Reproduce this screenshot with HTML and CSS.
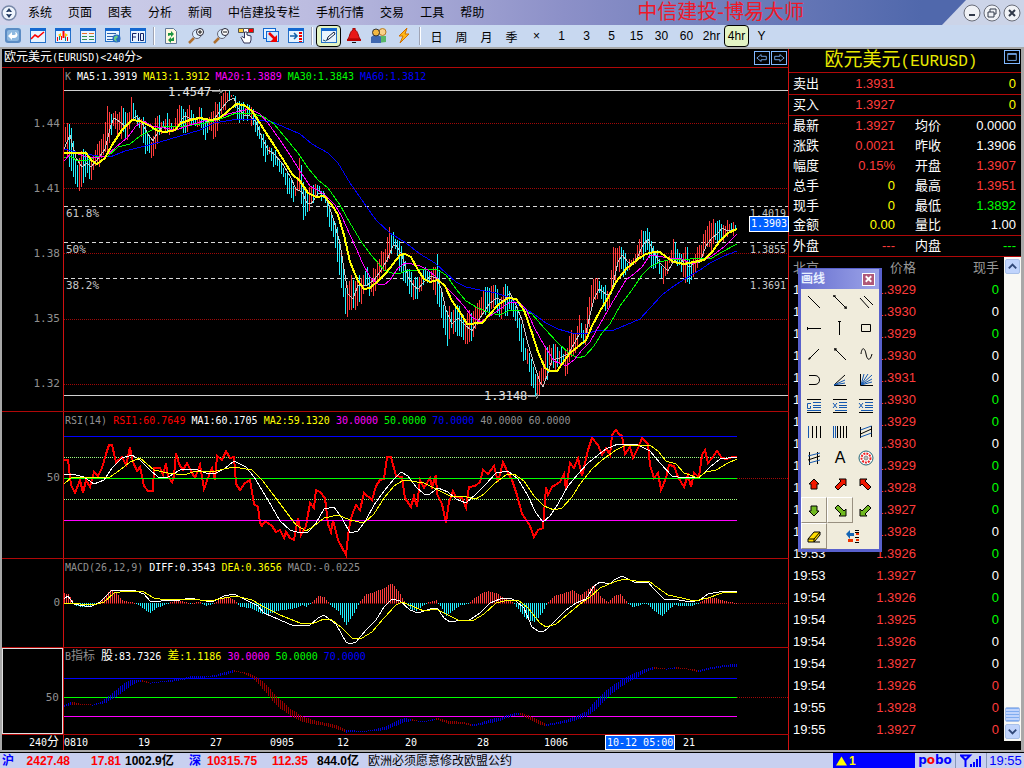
FILE: index.html
```
<!DOCTYPE html>
<html lang="zh-CN">

<head>
    <meta charset="UTF-8">
    <meta name="viewport" content="width=device-width, initial-scale=1.0">
    <title>中信建投-博易大师</title>
    <link rel="stylesheet" href="styles.css">
</head>

<body>
    <header class="titlebar">
        <svg class="logo" viewBox="0 0 16 16"><circle cx="8" cy="8" r="7" fill="#eef4fc" stroke="#7888a8" stroke-width="1.5"/><path d="M8 3l3 4H5zM8 13l3-4H5z" fill="#203860"/><circle cx="8" cy="8" r="1.5" fill="#fff"/></svg>
        <nav class="menu">
            <a href="#">系统</a>
            <a href="#">页面</a>
            <a href="#">图表</a>
            <a href="#">分析</a>
            <a href="#">新闻</a>
            <a href="#">中信建投专栏</a>
            <a href="#">手机行情</a>
            <a href="#">交易</a>
            <a href="#">工具</a>
            <a href="#">帮助</a>
        </nav>
        <h1 class="app-name">中信建投-博易大师</h1>
        <div class="window-buttons">
            <button type="button" aria-label="最小化"><svg viewBox="0 0 18 18"><circle cx="9" cy="9" r="8"/><path d="M6 11h6" stroke-width="2"/></svg></button>
            <button type="button" aria-label="还原"><svg viewBox="0 0 18 18"><circle cx="9" cy="9" r="8"/><path d="M7 8V5h6v5h-2M5 8h6v5H5z"/></svg></button>
            <button type="button" aria-label="关闭"><svg viewBox="0 0 18 18"><circle cx="9" cy="9" r="8"/><path d="M6 6l6 6M12 6l-6 6" stroke-width="2"/></svg></button>
        </div>
    </header>

    <div class="toolbar">
        <button type="button" aria-label="返回"><svg viewBox="0 0 16 16"><rect x="0" y="0" width="16" height="15" rx="3" fill="#5b8cc4"/><rect x="2" y="2" width="12" height="11" rx="2" fill="#8db8e0"/><path d="M3 8l4-4v3h2c2 0 2-2 1-3 3 0 4 6-1 6H7v2z" fill="#fff"/></svg></button>
        <button type="button" aria-label="走势图"><svg viewBox="0 0 16 16"><rect x="0.5" y="0.5" width="15" height="14" fill="#e8f4ff" stroke="#2470c8"/><path d="M0 1.5h16" stroke="#1468d0" stroke-width="3"/><path d="M1 11l4-4 3 2 6-5" fill="none" stroke="#f00" stroke-width="1.6"/></svg></button>
        <button type="button" aria-label="K线图"><svg viewBox="0 0 16 16"><rect x="0.5" y="0.5" width="15" height="14" fill="#e8f4ff" stroke="#2470c8"/><path d="M0 1.5h16" stroke="#1468d0" stroke-width="3"/><path d="M2.5 9v4M6.5 8v4M12.5 9v4" stroke="#f00"/><path d="M4.5 8v4M10.5 8v5" stroke="#088"/><path d="M3 7l3-2v4zM13 7l-3-2v4z" fill="#fc0"/><path d="M8.5 3v7" stroke="#f00" stroke-width="2"/></svg></button>
        <button type="button" aria-label="报价表"><svg viewBox="0 0 16 16"><rect x="0.5" y="0.5" width="15" height="14" fill="#e8f4ff" stroke="#2470c8"/><path d="M0 1.5h16" stroke="#1468d0" stroke-width="3"/><path d="M2 5.5h5M9 5.5h5" stroke="#e87028"/><path d="M2 8.5h5M9 8.5h5M2 11.5h5M9 11.5h5" stroke="#30904c"/></svg></button>
        <button type="button" aria-label="资讯"><svg viewBox="0 0 16 16"><rect x="0.5" y="0.5" width="14" height="13" fill="#e8f4ff" stroke="#2470c8"/><path d="M0 1.5h15" stroke="#1468d0" stroke-width="3"/><path d="M2 5.5h9M2 8.5h6M2 11.5h6" stroke="#2c60a8"/><circle cx="11.5" cy="10.5" r="4" fill="#286cc0"/><path d="M9 9q3-3 4 0l-2 2 1 3-3-2z" fill="#6c8"/></svg></button>
        <button type="button" aria-label="F10"><svg viewBox="0 0 16 16"><rect x="0.5" y="0.5" width="15" height="14" fill="#e8f4ff" stroke="#2470c8"/><path d="M0 1.5h16" stroke="#1468d0" stroke-width="3"/><path d="M2.5 13V5.5h4M3 9h3M8.5 5v8M10.500 5.500h3v7h-3z" fill="none" stroke="#126"/></svg></button>
        <span class="separator"></span>
        <button type="button" aria-label="刷新"><svg viewBox="0 0 16 16"><path d="M2.5 .5h8l3 3v12h-11z" fill="#fff8e0" stroke="#607898"/><path d="M5 8V5h3V3l3 3-3 3V7M11 9v4H8v2l-3-3 3-3v2" fill="#1b9440"/></svg></button>
        <button type="button" aria-label="放大"><svg viewBox="0 0 16 16"><path d="M6 10l-5 5" stroke="#b07030" stroke-width="2.5"/><circle cx="9" cy="6" r="4.5" fill="#dceeff" stroke="#667"/><circle cx="12" cy="4" r="3.500" fill="#fff" stroke="#223"/><path d="M10 4h4M12 2v4" stroke="#111"/></svg></button>
        <button type="button" aria-label="缩小"><svg viewBox="0 0 16 16"><path d="M6 10l-5 5" stroke="#b07030" stroke-width="2.5"/><circle cx="9" cy="6" r="4.5" fill="#dceeff" stroke="#667"/><circle cx="12" cy="4" r="3.500" fill="#fff" stroke="#223"/><path d="M10 4h4" stroke="#111"/></svg></button>
        <button type="button" aria-label="选择"><svg viewBox="0 0 16 16"><path d="M.5 .5h5v4h-5z" fill="#ffd040" stroke="#555"/><path d="M5.500 .5h5v4h-5z" fill="#fff" stroke="#555"/><path d="M10.500 .5h5v4h-5z" fill="#f00" stroke="#555"/><path d="M6.5 4v6L4 8.500l-1 1L6 15h6l1-3V8L9 7V4z" fill="#fff" stroke="#335"/></svg></button>
        <button type="button" aria-label="导出"><svg viewBox="0 0 16 16"><rect x=".5" y=".5" width="12" height="10" fill="#e8f4ff" stroke="#1468d0"/><rect x="3.5" y="3.5" width="12" height="10" fill="#cde6ff" stroke="#1468d0"/><path d="M6 5l6 6" stroke="#e00" stroke-width="2.5"/><path d="M14 7v7H7z" fill="#e00"/></svg></button>
        <button type="button" aria-label="侧栏"><svg viewBox="0 0 16 16"><rect x=".5" y=".5" width="15" height="14" fill="#e8f4ff" stroke="#2470c8"/><path d="M0 1.5h16" stroke="#1468d0" stroke-width="3"/><path d="M2 8h6M6 5l3 3-3 3" fill="none" stroke="#125fa8" stroke-width="1.5"/><path d="M12.5 4v10" stroke="#e00" stroke-width="3" stroke-dasharray="2 1"/></svg></button>
        <span class="separator"></span>
        <button type="button" class="active" aria-label="画线"><svg viewBox="0 0 16 16"><rect x=".5" y=".5" width="15" height="14" fill="#e8f4ff" stroke="#2470c8"/><path d="M0 1.5h16" stroke="#1468d0" stroke-width="3"/><path d="M2 12q3 2 4 0" fill="none" stroke="#157"/><path d="M6 12l1-3 6-5 1 2-6 5z" fill="#fff" stroke="#124"/></svg></button>
        <button type="button" aria-label="预警"><svg viewBox="0 0 16 16"><path d="M7 0h2v2c3 1 3 6 5 9H2c2-3 2-8 5-9z" fill="#e81818" stroke="#900"/><path d="M1 11h14v2H1z" fill="#b00"/><path d="M6 14h4v1H6z" fill="#111"/></svg></button>
        <button type="button" aria-label="用户"><svg viewBox="0 0 16 16"><path d="M7 15V8h8v6z" fill="#58b868"/><circle cx="11.5" cy="4" r="3.5" fill="#f8d088" stroke="#b87820"/><path d="M0 15V9l3-2h4l3 2v6z" fill="#4068b0"/><circle cx="5" cy="4.5" r="3.5" fill="#f4b840" stroke="#333"/></svg></button>
        <button type="button" aria-label="闪电"><svg viewBox="0 0 16 16"><path d="M11 0L3 8h4l-3 7 9-9H9z" fill="#ffb818" stroke="#d07000"/></svg></button>
        <span class="separator"></span>
        <button type="button">日</button>
        <button type="button">周</button>
        <button type="button">月</button>
        <button type="button">季</button>
        <button type="button">×</button>
        <button type="button">1</button>
        <button type="button">3</button>
        <button type="button">5</button>
        <button type="button">15</button>
        <button type="button">30</button>
        <button type="button">60</button>
        <button type="button">2hr</button>
        <button type="button" class="active">4hr</button>
        <button type="button">Y</button>
    </div>

    <main class="workspace">
        <section class="charts">
            <div class="chart-title">
                <h2><span class="cjk">欧元美元</span>(EURUSD)&lt;240<span class="cjk">分</span>&gt;</h2>
                <div class="chart-nav">
                    <button type="button" aria-label="上一个"><svg viewBox="0 0 16 14"><path d="M2 7l5-4v2h6v4H7v2z"/></svg></button>
                    <button type="button" aria-label="下一个"><svg viewBox="0 0 16 14"><path d="M14 7L9 3v2H3v4h6v2z"/></svg></button>
                </div>
            </div>

            <div class="panel panel-k">
                <div class="axis axis-k">
                    <span>1.44</span>
                    <span>1.41</span>
                    <span>1.38</span>
                    <span>1.35</span>
                    <span>1.32</span>
                </div>
                <div class="plot">
                    <svg viewBox="64 68 724 343" preserveAspectRatio="none">
                        <path class="dots" d="M64 123.5H788M64 188.5H788M64 253.5H788M64 319.5H788M64 384.5H788"/>
                        <path class="limit" d="M64 90.5H788M64 395.5H788"/>
                        <path class="fib" d="M64 206.5H788M64 242.5H788M64 278.5H788"/>
                        <g id="candles"></g>
                        <polyline class="line gray" points="64,149 70,135 76,158 82,167 87,163 91,167 97,160 105,149 111,125 114,118 120,122 126,127 130,122 136,116 142,123 148,134 153,141 158,132 163,126 168,130 175,131 184,116 192,119 200,117 208,122 215,118 222,108 228,101 234,98 238,108 244,115 250,116 256,122 262,138 268,150 274,154 282,163 290,176 296,189 302,192 307,203 311,204 318,194 324,193 328,203 334,221 340,244 345,275 348,294 353,299 358,285 366,286 374,280 380,272 386,262 393,246 396,245 402,255 408,277 414,286 418,289 424,282 430,276 436,278 441,288 446,310 452,324 458,318 464,324 472,331 478,321 484,312 490,303 497,298 503,301 510,293 516,305 522,320 528,344 534,364 540,382 543,387 548,373 552,360 560,358 568,354 574,344 580,333 586,333 590,315 594,299 599,289 606,294 611,294 614,280 618,262 622,255 628,262 633,265 638,256 643,245 648,239 654,253 660,263 668,271 674,261 680,258 685,264 690,267 695,262 700,262 706,246 712,238 718,233 722,228 728,231 737,229"/>
                        <polyline class="line blue" points="64,149 80,153 98,156 110,157 125,151 145,146 160,142 180,136 200,130 214,123 232,120 250,119 272,122 284,127 300,134 312,144 328,153 338,163 350,183 364,203 376,220 390,233 406,243 420,254 435,263 446,273 456,282 466,287 480,290 496,293 508,297 520,306 534,314 546,323 558,329 572,333 586,334 598,330 614,330 626,325 640,319 650,308 662,295 674,286 688,277 700,270 710,263 724,256 737,251"/>
                        <polyline class="line green" points="64,158 70,156 76,160 88,160 98,156 108,156 118,147 130,144 140,136 152,130 166,126 184,126 200,124 214,121 226,117 236,113 250,113 264,117 274,124 284,136 298,153 308,168 318,180 328,188 340,205 350,223 362,243 372,256 384,270 392,273 398,274 406,271 418,270 436,269 446,275 456,289 466,301 478,308 490,313 500,315 510,310 522,310 532,314 544,328 558,343 570,354 578,358 585,356 594,346 602,333 610,324 620,306 634,287 642,275 650,267 660,262 672,259 690,259 712,258 722,252 737,244"/>
                        <polyline class="line magenta" points="64,161 72,152 84,156 92,158 106,156 116,147 128,137 136,126 144,121 152,126 164,128 176,130 190,125 204,121 216,120 228,114 236,112 250,109 260,114 268,123 280,140 290,155 300,171 310,186 324,194 335,205 342,217 350,235 357,250 362,262 370,277 378,284 384,285 390,280 398,268 405,263 412,264 420,266 428,270 436,277 444,285 454,295 464,306 472,317 480,322 490,316 500,309 510,302 518,302 526,309 534,327 544,345 554,361 566,366 574,360 582,350 590,342 600,324 612,303 626,280 634,274 642,267 650,255 658,256 668,258 680,258 692,264 704,260 712,256 724,247 737,234"/>
                        <polyline class="line yellow thick" points="64,153 86,153 92,161 97,164 105,158 112,145 122,130 132,120 140,121 150,126 158,131 166,132 175,130 181,123 190,120 200,118 210,120 218,119 226,113 236,104 244,105 252,111 258,120 266,133 274,145 284,161 292,174 300,181 308,193 316,197 324,196 332,205 338,215 344,235 350,262 358,281 364,289 370,288 378,281 386,273 393,264 400,255 405,254 411,257 418,270 424,279 430,282 438,280 445,286 452,301 460,312 467,324 482,323 490,314 498,305 508,298 516,299 524,310 532,333 538,352 545,368 550,371 557,371 562,364 570,353 580,345 586,340 592,326 600,311 608,298 616,282 626,269 638,259 646,254 654,252 660,252 666,257 674,262 684,264 694,262 704,260 712,252 720,241 728,233 737,229"/>
                        <path class="marker" d="M212 91.5h9M219 89l3 2.5-3 2.5M528 396h8M536 393l2 3-2 3"/>
                    </svg>
                    <div class="legend">
                        <span class="c-gray">K</span>
                        <span class="c-white">MA5:1.3919</span>
                        <span class="c-yellow">MA13:1.3912</span>
                        <span class="c-magenta">MA20:1.3889</span>
                        <span class="c-green">MA30:1.3843</span>
                        <span class="c-blue">MA60:1.3812</span>
                    </div>
                    <span class="mark mark-high">1.4547</span>
                    <span class="mark mark-low">1.3148</span>
                    <span class="level level-618">61.8%</span>
                    <span class="level level-500">50%</span>
                    <span class="level level-382">38.2%</span>
                    <span class="price level-618">1.4019</span>
                    <span class="price level-500">1.3855</span>
                    <span class="price level-382">1.3691</span>
                    <span class="price-now">1.3903</span>
                </div>
            </div>

            <div class="panel panel-rsi">
                <div class="axis axis-rsi"><span>50</span></div>
                <div class="plot">
                    <svg viewBox="64 412 724 146" preserveAspectRatio="none">
                        <path class="dots" d="M737 478.5H788"/>
                        <path class="dots pale" d="M64 457.5H737M64 499.5H737"/>
                        <polyline class="line red thick" points="64,460 68,460 71,485 75,493 80,480 83,493 86,480 90,487 94,472 98,476 102,468 106,454 109,445 112,445 116,462 122,457 126,465 128,457 130,447 133,462 137,471 140,467 144,486 148,491 153,491 154,468 160,468 163,475 166,463 168,477 172,482 174,476 176,453 179,464 183,470 187,463 190,469 195,478 200,465 204,489 208,478 212,468 215,480 217,456 222,460 226,451 230,458 234,457 236,484 240,490 245,483 250,480 254,504 258,507 260,523 262,526 265,521 272,526 276,532 280,530 284,538 286,532 290,538 294,540 298,518 301,535 306,526 310,503 314,508 316,490 320,492 325,498 328,524 331,532 333,520 338,540 346,555 349,528 352,515 356,505 360,510 364,493 372,500 376,486 380,480 384,479 387,457 391,457 396,476 402,477 405,498 411,507 414,496 417,507 420,480 424,488 430,478 432,487 436,475 437,494 442,504 446,523 449,502 453,491 456,497 462,498 466,508 469,487 475,486 480,482 483,470 488,474 494,466 498,482 503,462 507,471 512,480 517,495 522,514 527,521 530,526 534,537 538,530 543,528 546,487 548,495 552,487 560,482 564,474 566,490 570,463 574,468 578,458 582,476 588,450 592,438 598,445 602,455 606,448 610,455 612,435 616,430 619,434 622,436 625,454 630,447 633,458 638,448 642,438 648,444 650,465 654,478 658,473 661,490 666,478 669,465 674,466 678,477 684,487 688,475 691,487 694,473 699,477 702,455 705,450 708,463 712,458 717,451 722,458 727,459 732,457 737,457"/>
                        <path class="line blue" d="M64 436.5H737"/>
                        <path class="line green" d="M64 478.5H737"/>
                        <path class="line magenta" d="M64 520.5H737"/>
                        <polyline class="line white" points="64,475 72,474 84,477 94,484 104,480 112,468 122,458 132,455 140,460 150,470 158,477 168,477 180,470 195,469 206,473 214,474 224,469 234,461 246,467 254,477 262,490 272,507 280,521 290,530 300,533 308,532 316,523 324,509 334,507 342,518 350,533 358,531 366,520 374,505 384,491 394,479 401,472 408,476 416,487 424,494 430,494 438,488 448,492 456,499 466,503 476,494 486,484 496,473 508,471 518,479 528,496 536,513 543,522 550,516 558,504 568,486 578,474 588,463 598,455 606,449 618,444 636,444 650,451 660,463 672,476 684,478 700,477 710,467 720,459 737,457"/>
                        <polyline class="line yellow" points="64,484 72,477 90,478 110,477 120,470 130,462 140,458 154,470 168,473 184,475 196,471 212,472 224,469 234,467 252,470 262,480 272,493 284,509 296,525 306,531 314,526 324,518 338,515 350,520 364,523 374,514 384,498 394,486 404,480 424,483 440,491 450,496 462,496 476,499 484,494 494,484 506,475 514,474 524,481 534,496 544,506 554,510 562,508 572,497 580,484 592,469 602,460 616,450 626,445 650,445 658,451 666,461 676,464 684,473 698,478 706,472 716,470 728,463 737,459"/>
                    </svg>
                    <div class="legend">
                        <span class="c-gray">RSI(14)</span>
                        <span class="c-red">RSI1:60.7649</span>
                        <span class="c-white">MA1:60.1705</span>
                        <span class="c-yellow">MA2:59.1320</span>
                        <span class="c-magenta">30.0000</span>
                        <span class="c-green">50.0000</span>
                        <span class="c-blue">70.0000</span>
                        <span class="c-gray">40.0000</span>
                        <span class="c-gray">60.0000</span>
                    </div>
                </div>
            </div>

            <div class="panel panel-macd">
                <div class="axis axis-macd"><span>0</span></div>
                <div class="plot">
                    <svg viewBox="64 559 724 88" preserveAspectRatio="none">
                        <path class="dots" d="M64 603.5H788"/>
                        <g id="histogram"></g>
                        <polyline class="line white" points="64,599 68,596 74,604 90,607 100,602 112,590 120,590 136,591 144,594 150,601 156,602 166,600 180,600 190,598 200,600 212,602 224,596 234,594 246,600 258,606 264,613 280,620 294,626 304,625 310,625 318,618 324,615 336,624 346,642 350,644 356,642 366,630 376,620 384,607 392,599 400,601 410,610 418,613 430,609 437,608 444,618 450,622 462,620 468,621 480,613 490,603 500,599 510,598 516,601 524,608 532,627 538,631 543,632 548,628 556,620 566,610 576,603 586,599 594,586 600,582 610,584 614,580 622,576 634,582 648,582 654,589 664,599 674,599 690,602 700,600 708,594 724,591 737,592"/>
                        <polyline class="line yellow" points="64,603 80,604 94,605 104,602 114,593 126,591 142,591 154,598 166,600 190,599 210,601 224,598 236,596 252,600 264,607 280,615 300,623 312,624 324,619 332,620 342,628 352,638 362,638 372,632 384,618 396,605 402,602 414,607 424,611 436,609 446,614 458,620 474,620 484,614 496,603 508,600 518,600 528,608 540,623 546,627 556,624 568,614 580,604 590,597 600,588 614,582 624,579 636,581 650,582 658,588 668,595 682,598 694,601 708,598 722,593 737,592"/>
                    </svg>
                    <div class="legend">
                        <span class="c-gray">MACD(26,12,9)</span>
                        <span class="c-white">DIFF:0.3543</span>
                        <span class="c-yellow">DEA:0.3656</span>
                        <span class="c-gray">MACD:-0.0225</span>
                    </div>
                </div>
            </div>

            <div class="panel panel-b">
                <div class="axis axis-b"><span>50</span></div>
                <div class="plot">
                    <svg viewBox="64 648 724 86" preserveAspectRatio="none">
                        <path class="dots" d="M737 697.5H788"/>
                        <path class="line blue" d="M64 678.5H737"/>
                        <path class="line green" d="M64 697.5H737"/>
                        <path class="line magenta" d="M64 716.5H737"/>
                        <g id="trend"></g>
                    </svg>
                    <div class="legend">
                        <span class="c-gray">B<span class="cjk">指标</span></span>
                        <span class="c-white"><span class="cjk">股</span>:83.7326</span>
                        <span class="c-yellow"><span class="cjk">差</span>:1.1186</span>
                        <span class="c-magenta">30.0000</span>
                        <span class="c-green">50.0000</span>
                        <span class="c-blue">70.0000</span>
                    </div>
                </div>
            </div>

            <div class="time-axis">
                <span class="period">240<span class="cjk">分</span></span>
                <span>0810</span>
                <span>19</span>
                <span>27</span>
                <span>0905</span>
                <span>12</span>
                <span>20</span>
                <span>28</span>
                <span>1006</span>
                <span class="current">10-12 05:00</span>
                <span>21</span>
            </div>
        </section>

        <aside class="quotes">
            <div class="quote-title">
                <h2>欧元美元<span class="code">(EURUSD)</span></h2>
                <button type="button" aria-label="最大化"><svg viewBox="0 0 16 14"><path d="M3 3h10v8H3zM3 4h10"/></svg></button>
            </div>
            <table class="quote-table">
                <tbody class="bordered">
                    <tr><th scope="row">卖出</th><td class="up">1.3931</td><th></th><td class="c-yellow">0</td></tr>
                    <tr><th scope="row">买入</th><td class="up">1.3927</td><th></th><td class="c-yellow">0</td></tr>
                </tbody>
                <tbody class="details">
                    <tr><th scope="row">最新</th><td class="up">1.3927</td><th>均价</th><td>0.0000</td></tr>
                    <tr><th scope="row">涨跌</th><td class="up">0.0021</td><th>昨收</th><td>1.3906</td></tr>
                    <tr><th scope="row">幅度</th><td class="up">0.15%</td><th>开盘</th><td class="up">1.3907</td></tr>
                    <tr><th scope="row">总手</th><td class="c-yellow">0</td><th>最高</th><td class="up">1.3951</td></tr>
                    <tr><th scope="row">现手</th><td class="c-yellow">0</td><th>最低</th><td class="down">1.3892</td></tr>
                    <tr><th scope="row">金额</th><td class="c-yellow">0.00</td><th>量比</th><td>1.00</td></tr>
                </tbody>
                <tbody class="bordered top-line">
                    <tr><th scope="row">外盘</th><td class="up">---</td><th>内盘</th><td class="down">---</td></tr>
                </tbody>
            </table>

            <div class="ticks">
                <table class="tick-table">
                    <thead>
                        <tr><th>北京</th><th>价格</th><th>现手</th></tr>
                    </thead>
                    <tbody>
                        <tr><td>19:52</td><td>1.3929</td><td class="down">0</td></tr>
                        <tr><td>19:52</td><td>1.3930</td><td>0</td></tr>
                        <tr><td>19:52</td><td>1.3929</td><td class="down">0</td></tr>
                        <tr><td>19:52</td><td>1.3930</td><td>0</td></tr>
                        <tr><td>19:52</td><td>1.3931</td><td>0</td></tr>
                        <tr><td>19:52</td><td>1.3930</td><td class="down">0</td></tr>
                        <tr><td>19:52</td><td>1.3929</td><td class="down">0</td></tr>
                        <tr><td>19:53</td><td>1.3930</td><td>0</td></tr>
                        <tr><td>19:53</td><td>1.3929</td><td class="down">0</td></tr>
                        <tr><td>19:53</td><td>1.3928</td><td class="down">0</td></tr>
                        <tr><td>19:53</td><td>1.3927</td><td class="down">0</td></tr>
                        <tr><td>19:53</td><td>1.3928</td><td>0</td></tr>
                        <tr><td>19:53</td><td>1.3926</td><td class="down">0</td></tr>
                        <tr><td>19:53</td><td>1.3927</td><td>0</td></tr>
                        <tr><td>19:54</td><td>1.3926</td><td class="down">0</td></tr>
                        <tr><td>19:54</td><td>1.3925</td><td class="down">0</td></tr>
                        <tr><td>19:54</td><td>1.3926</td><td>0</td></tr>
                        <tr><td>19:54</td><td>1.3927</td><td>0</td></tr>
                        <tr><td>19:54</td><td>1.3926</td><td class="up">0</td></tr>
                        <tr><td>19:55</td><td>1.3928</td><td class="up">0</td></tr>
                        <tr><td>19:55</td><td>1.3927</td><td class="up">0</td></tr>
                    </tbody>
                </table>
                <div class="scrollbar">
                    <button type="button" aria-label="向上滚动"><svg viewBox="0 0 14 14"><path d="M3 9l4-4 4 4"/></svg></button>
                    <div class="track"></div>
                    <div class="thumb"></div>
                    <button type="button" aria-label="向下滚动"><svg viewBox="0 0 14 14"><path d="M3 5l4 4 4-4"/></svg></button>
                </div>
            </div>

            <div class="palette">
                <div class="palette-title">
                    <h3>画线</h3>
                    <button type="button" aria-label="关闭画线"><svg viewBox="0 0 12 12"><path d="M3 3l6 6M9 3l-6 6"/></svg></button>
                </div>
                <div class="tools">
                    <button type="button" aria-label="直线"><svg viewBox="0 0 16 16"><path d="M2 2l12 12"/></svg></button>
                    <button type="button" aria-label="线段"><svg viewBox="0 0 16 16"><path d="M2 2l12 12M2 1v2M1 2h3M12 14h3M14 12v3"/></svg></button>
                    <button type="button" aria-label="平行线"><svg viewBox="0 0 16 16"><path d="M2 4l9 10M6 2l9 9"/></svg></button>
                    <button type="button" aria-label="水平线"><svg viewBox="0 0 16 16"><path d="M1 8.5h14M1.5 7v3"/></svg></button>
                    <button type="button" aria-label="垂直线"><svg viewBox="0 0 16 16"><path d="M7.5 1v14M6 1.5h3"/></svg></button>
                    <button type="button" aria-label="矩形"><svg viewBox="0 0 16 16"><path d="M3.5 4.5h9v7h-9z"/></svg></button>
                    <button type="button" aria-label="射线"><svg viewBox="0 0 16 16"><path d="M3 13L13 3M2 13h2v-2"/></svg></button>
                    <button type="button" aria-label="反射线"><svg viewBox="0 0 16 16"><path d="M3 3l11 11M2 3h3M3 2v3"/></svg></button>
                    <button type="button" aria-label="周期"><svg viewBox="0 0 16 16"><path d="M3 8c1-8 4-6 5 0s4 8 6 0"/></svg></button>
                    <button type="button" aria-label="弧线"><svg viewBox="0 0 16 16"><path d="M3 3.5h6c6 0 6 9 0 9H3"/></svg></button>
                    <button type="button" aria-label="甘氏线"><svg viewBox="0 0 16 16"><path d="M2 13.5h12M2 13L13 3"/><path class="ink-blue" d="M2 13l11-5M2 13l11-2"/></svg></button>
                    <button type="button" aria-label="速阻线"><svg viewBox="0 0 16 16"><path class="ink-blue" d="M3 13l3-11M3 13l7-11M3 13l11-10M3 13l11-6M3 13l11-3"/><path d="M2.5 2v11.5H15"/></svg></button>
                    <button type="button" aria-label="黄金分割"><svg viewBox="0 0 16 16"><path d="M1 1.5h14M1 14.5h14"/><path class="ink-blue" d="M7 4.5h8M7 7.5h8M7 9.5h8M1 12.5h14M5 5.5H1.5v5h3V8"/></svg></button>
                    <button type="button" aria-label="百分比线"><svg viewBox="0 0 16 16"><path d="M1 1.5h14M1 14.5h14"/><path class="ink-blue" d="M7 4.5h8M7 7.5h8M7 9.5h8M3 12.5h12M1 5l4 5M5 5l-4 5"/></svg></button>
                    <button type="button" aria-label="波段线"><svg viewBox="0 0 16 16"><path d="M1 1.5h14M1 14.5h14"/><path class="ink-blue" d="M7 4.5h8M7 7.5h8M7 9.5h8M3 12.5h12M1 5l4 5M5 5l-4 5"/></svg></button>
                    <button type="button" aria-label="周期线"><svg viewBox="0 0 16 16"><path class="ink-blue" d="M2.5 2v12"/><path d="M6.5 2v12M10.5 2v12M14.5 2v12"/></svg></button>
                    <button type="button" aria-label="斐波那契"><svg viewBox="0 0 16 16"><path class="ink-blue" d="M1.5 2v12M3.5 2v12"/><path d="M5.5 2v12M8.5 2v12M11.5 2v12M14.5 2v12"/></svg></button>
                    <button type="button" aria-label="通道"><svg viewBox="0 0 16 16"><path d="M2.5 3v11M13.5 2v11M2.5 10l11-5"/><path class="ink-blue" d="M2.5 6l11-4M2.5 13l11-4"/></svg></button>
                    <button type="button" aria-label="回归通道"><svg viewBox="0 0 16 16"><path d="M3.5 2v13M11.5 2v12M2 10l12-4"/><path class="ink-blue" d="M2 6l12-3M3 13l11-3"/></svg></button>
                    <button type="button" aria-label="文字" class="text-tool">A</button>
                    <button type="button" aria-label="圆周"><svg viewBox="0 0 16 16"><circle cx="8" cy="8" r="7" fill="#fff" stroke="#267"/><circle cx="8" cy="8" r="4.5" fill="none" stroke="#e22" stroke-width="2" stroke-dasharray="2 1"/><circle cx="8" cy="8" r="2" fill="#bbb" stroke="#888"/></svg></button>
                    <button type="button" aria-label="红色上箭头"><svg viewBox="0 0 16 16"><path class="arrow-red" d="M8 3l5 5h-2v5H5V8H3z"/></svg></button>
                    <button type="button" aria-label="红色右上箭头"><svg viewBox="0 0 16 16"><path class="arrow-red" d="M14 3v7l-2-2-6 6-3-3 6-6-2-2z"/></svg></button>
                    <button type="button" aria-label="红色左上箭头"><svg viewBox="0 0 16 16"><path class="arrow-red" d="M2 3v7l2-2 6 6 3-3-6-6 2-2z"/></svg></button>
                    <button type="button" class="raised" aria-label="绿色下箭头"><svg viewBox="0 0 16 16"><path class="arrow-green" d="M8 14l5-5h-2V4H5v5H3z"/></svg></button>
                    <button type="button" class="raised" aria-label="绿色右下箭头"><svg viewBox="0 0 16 16"><path class="arrow-green" d="M14 14V7l-2 2-6-6-3 3 6 6-2 2z"/></svg></button>
                    <button type="button" aria-label="绿色左下箭头"><svg viewBox="0 0 16 16"><path class="arrow-green" d="M2 14V7l2 2 6-6 3 3-6 6 2 2z"/></svg></button>
                    <button type="button" class="raised" aria-label="橡皮"><svg viewBox="0 0 16 16"><path d="M2 11l6-7h6v3l-6 7H2z" fill="#fd0"/><path d="M2 11h6v3M8 11l6-7M8 14h6"/></svg></button>
                    <button type="button" class="wide" aria-label="隐藏"><svg viewBox="0 0 16 16"><path d="M1 6l4-4v3h4v3H5v3z" fill="#1464b4" stroke="none"/><path d="M3 11h5v3H3zM11 5h3v2h-3zM11 11h3v2h-3z" fill="#e30" stroke="none"/><path d="M10 2.5h4M10 4.5h4M10 9.5h4M10 14.5h4"/></svg></button>
                </div>
            </div>
        </aside>
    </main>

    <footer class="statusbar">
        <div class="index index-sh">
            <b class="market">沪</b>
            <b class="value">2427.48</b>
            <b class="change">17.81</b>
            <b class="amount">1002.9亿</b>
        </div>
        <div class="index index-sz">
            <b class="market">深</b>
            <b class="value">10315.75</b>
            <b class="change">112.35</b>
            <b class="amount">844.0亿</b>
        </div>
        <div class="news">欧洲必须愿意修改欧盟公约</div>
        <div class="alert"><svg viewBox="0 0 12 12"><path d="M6 1l6 10H0z"/></svg>1</div>
        <div class="brand">p<span>o</span>bo</div>
        <div class="signal"><svg viewBox="0 0 22 14"><path d="M1 1.5h9L5.5 6zM5.5 5v8" fill="none" stroke="#00f" stroke-width="2"/><path d="M10 10h2v3h-2zM13 8h2v5h-2zM16 5h2v8h-2zM19 2h2v11h-2z" fill="#00f"/></svg></div>
        <time class="clock">19:55</time>
    </footer>

    <script src="charts.js"></script>
</body>

</html>
```
FILE: styles.css
```
* {
    box-sizing: border-box;
}

body {
    display: flex;
    flex-direction: column;
    min-height: 100vh;
    margin: 0;
    background-color: #000;
    color: #fff;
    font-family: "Liberation Sans", "Noto Sans CJK SC", sans-serif;
    font-size: 13px;
}

h1,
h2,
h3 {
    margin: 0;
    font-weight: normal;
}

button {
    display: flex;
    align-items: center;
    justify-content: center;
    margin: 0;
    padding: 0;
    border: none;
    background: none;
    font-family: inherit;
    color: #000;
}

table {
    border-collapse: collapse;
    table-layout: fixed;
    width: 100%;
}

th,
td {
    padding: 0;
    font-weight: normal;
}

/* title bar */
.titlebar {
    display: flex;
    align-items: center;
    height: 25px;
    padding-left: 1px;
    background: linear-gradient(to right, #d2d4ec, #bcbce0 30%, #8c90c8 55%, #5068ac 90%);
}

.logo {
    width: 16px;
    height: 16px;
}

.menu {
    display: flex;
    gap: 16px;
    margin-left: 11px;
}

.menu a {
    color: #000;
    font-size: 12px;
    line-height: 24px;
    text-decoration: none;
}

.app-name {
    margin-left: auto;
    margin-right: 138px;
    color: #f01828;
    font-size: 20px;
    line-height: 25px;
    white-space: nowrap;
}

.window-buttons {
    display: flex;
    justify-content: flex-end;
    align-items: center;
    gap: 2px;
    width: 82px;
    height: 25px;
    padding-right: 3px;
    background-color: #ccd4e8;
    clip-path: polygon(24px 0, 100% 0, 100% 100%, 0 100%);
}

.window-buttons svg {
    display: block;
    width: 18px;
    height: 18px;
    fill: none;
    stroke: #303848;
}

.window-buttons circle {
    fill: #f0f2f6;
    stroke: #686c78;
}

/* tool bar */
.toolbar {
    display: flex;
    align-items: center;
    height: 22px;
    background-color: #c8d8f0;
}

.toolbar button {
    flex: none;
    width: 25px;
    height: 22px;
    font-size: 12px;
}

.toolbar svg {
    width: 16px;
    height: 16px;
}

.toolbar .active {
    border: 1px solid #000;
    border-radius: 4px;
    background-color: #e4f4c4;
}

.separator {
    width: 2px;
    height: 18px;
    margin: 0 3px;
    border-left: 1px solid #a0a4b4;
    border-right: 1px solid #fff;
}

/* main area */
.workspace {
    display: grid;
    grid-template-columns: minmax(0, 1fr) 232px;
    flex: 1;
    border: solid #a8a8a8;
    border-width: 2px 3px 2px 2px;
}

.charts,
.quotes {
    position: relative;
}

.charts {
    font-family: "DejaVu Sans Mono", monospace;
    font-size: 10px;
}

.charts .cjk {
    font-family: "Noto Sans CJK SC", sans-serif;
    font-size: 12px;
    line-height: 12px;
}

.c-gray {
    color: #909090;
}

.c-white {
    color: #fff;
}

.c-yellow {
    color: #ff0;
}

.c-magenta {
    color: #f0f;
}

.c-green {
    color: #0f0;
}

.c-blue {
    color: #00f;
}

.c-red {
    color: #f00;
}

.chart-title {
    display: flex;
    justify-content: space-between;
    align-items: center;
    height: 19px;
    padding-left: 2px;
    border-right: 1px solid #d01010;
    border-bottom: 1px solid #b00808;
}

.chart-title h2 {
    font-size: 10px;
    line-height: 18px;
}

.chart-nav {
    display: flex;
    gap: 1px;
    padding-right: 1px;
}

.chart-nav svg,
.quote-title svg {
    display: block;
    width: 16px;
    height: 14px;
    border: 1px solid #80b8ff;
    fill: none;
    stroke: #80b8ff;
}

.panel {
    display: flex;
    border-bottom: 1px solid #b00808;
}

.panel-k {
    height: 344px;
}

.panel-rsi {
    height: 147px;
}

.panel-macd {
    height: 89px;
}

.panel-b {
    height: 87px;
}

.axis {
    flex: none;
    width: 61px;
    padding-right: 3px;
    color: #909090;
    font-size: 11px;
    text-align: right;
}

.axis span {
    display: block;
    line-height: 16px;
}

.axis-k {
    padding-top: 23px;
}

.axis-k span {
    line-height: 65px;
}

.axis-rsi {
    padding-top: 58px;
}

.axis-macd {
    padding-top: 36px;
}

.axis-b {
    padding-top: 41px;
    border: 1px solid #e0e0e0;
}

.plot {
    position: relative;
    flex: 1;
    min-width: 0;
    border-left: 1px solid #d01010;
    border-right: 1px solid #d01010;
}

.plot svg {
    display: block;
    width: 100%;
    height: 100%;
    fill: none;
    shape-rendering: crispEdges;
}

.dots {
    stroke: #a00808;
    stroke-dasharray: 1 1;
}

.dots.pale {
    stroke: #a0ff80;
}

.limit {
    stroke: #d0d0d0;
}

.fib {
    stroke: #d8d8d8;
    stroke-dasharray: 4 3;
}

.marker {
    stroke: #808080;
}

.line {
    stroke-width: 1px;
}

.line.thick {
    stroke-width: 2px;
}

.line.gray {
    stroke: #c8c8c8;
}

.line.white {
    stroke: #fff;
}

.line.yellow {
    stroke: #ff0;
}

.line.magenta {
    stroke: #f0f;
}

.line.green {
    stroke: #0f0;
}

.line.blue {
    stroke: #00f;
}

.line.red {
    stroke: #f00;
}

.bar-up {
    stroke: #ff3c3c;
}

.bar-down {
    stroke: #20f0ff;
}

.bar-rise {
    stroke: #0000d8;
}

.bar-fall {
    stroke: #900;
}

.legend {
    position: absolute;
    top: 0;
    left: 1px;
    display: flex;
    gap: 6px;
    line-height: 17px;
    white-space: nowrap;
}

/* labels drawn over the price plot */
.mark,
.level,
.price,
.price-now {
    position: absolute;
    color: #c8c8c8;
    line-height: 12px;
}

.mark {
    color: #e0e0e0;
    font-size: 12px;
}

.mark-high {
    top: 18px;
    left: 104px;
}

.mark-low {
    top: 322px;
    left: 420px;
}

.level {
    left: 2px;
    font-size: 11px;
}

.price {
    right: 2px;
}

.level-618 {
    top: 140px;
}

.level-500 {
    top: 176px;
}

.level-382 {
    top: 212px;
}

.price-now {
    top: 148px;
    right: -1px;
    padding: 1px;
    border: 1px solid #fff;
    background-color: #0060ff;
    color: #fff;
}

.time-axis {
    display: grid;
    grid-template-columns: 62px 74px 72px 60px 67px 68px 72px 67px 61px 78px 1fr;
    line-height: 15px;
    border-right: 1px solid #d01010;
}

.time-axis .period {
    padding-right: 4px;
    border-right: 1px solid #d01010;
    text-align: right;
}

.time-axis .current {
    justify-self: start;
    padding: 0 1px;
    border: 1px solid #fff;
    background-color: #0060ff;
    line-height: 13px;
}

/* quote panel */
.quote-title {
    display: flex;
    align-items: center;
    height: 24px;
    border-bottom: 1px solid #b00808;
}

.quote-title h2 {
    flex: 1;
    padding-left: 9px;
    color: #e8e800;
    font-size: 19px;
    line-height: 23px;
    text-align: center;
}

.quote-title .code {
    font-family: "Liberation Mono", monospace;
    font-size: 16px;
}

.quote-title button {
    align-self: flex-start;
    margin: 1px 1px 0 0;
}

.quote-table th {
    width: 40px;
    padding-left: 4px;
    text-align: left;
}

.quote-table th + td + th {
    width: 60px;
    padding-left: 20px;
}

.quote-table td {
    text-align: right;
}

.quote-table td:last-child {
    padding-right: 5px;
}

.quote-table tr {
    height: 20px;
    line-height: 19px;
}

.quote-table .bordered tr {
    height: 21px;
    border-bottom: 1px solid #b00808;
}

.quote-table .top-line {
    border-top: 1px solid #b00808;
}

.up {
    color: #ff3c3c;
}

.down {
    color: #0f0;
}

.ticks {
    display: flex;
}

.tick-table tr {
    height: 22px;
    line-height: 20px;
}

.tick-table thead {
    color: #989898;
}

.tick-table th:first-child,
.tick-table td:first-child {
    width: 54px;
    padding-left: 4px;
    text-align: left;
}

.tick-table th,
.tick-table td {
    text-align: right;
}

.tick-table th:nth-child(2),
.tick-table td:nth-child(2) {
    width: 73px;
}

.tick-table td:nth-child(2) {
    color: #ff3c3c;
}

.tick-table th:last-child,
.tick-table td:last-child {
    padding-right: 5px;
}

.scrollbar {
    display: flex;
    flex-direction: column;
    gap: 2px;
    flex: none;
    width: 17px;
    padding: 2px 1px;
    background-color: #f8f8f4;
}

.scrollbar button,
.thumb {
    flex: none;
    width: 15px;
    height: 15px;
    border: 1px solid #a8c0e8;
    border-radius: 2px;
    background-color: #c0d4fc;
}

.scrollbar svg {
    width: 13px;
    height: 13px;
    fill: none;
    stroke: #304878;
    stroke-width: 2px;
}

.track {
    flex: 1;
}

.thumb {
    background-image: repeating-linear-gradient(#80acf0 0 1px, #c0d4fc 1px 3px);
}

/* floating drawing palette */
.palette {
    position: absolute;
    top: 219px;
    left: 9px;
    width: 84px;
    border: 3px solid #5860cc;
    border-top-width: 1px;
    background-color: #f0ecdc;
}

.palette-title {
    display: flex;
    align-items: center;
    justify-content: space-between;
    height: 20px;
    padding-right: 4px;
    background: linear-gradient(to right, #6870d0, #9ca4e8);
}

.palette-title h3 {
    font-size: 12px;
    font-weight: bold;
    line-height: 20px;
    color: #e8f0ff;
}

.palette-title button {
    width: 13px;
    height: 13px;
    border: 1px solid #fff;
    background-color: #b05878;
}

.palette-title svg {
    width: 12px;
    height: 12px;
    stroke: #fff;
    stroke-width: 2px;
}

.tools {
    display: grid;
    grid-template-columns: repeat(3, 26px);
}

.tools button {
    height: 26px;
}

.tools svg {
    width: 16px;
    height: 16px;
    fill: none;
    stroke: #000;
}

.tools .ink-blue {
    stroke: #1458b0;
}

.tools .arrow-red {
    fill: #f01800;
}

.tools .arrow-green {
    fill: #70b820;
}

.tools .text-tool {
    font-size: 16px;
}

.tools .raised {
    border: 1px solid #fff;
    border-right-color: #989080;
    border-bottom-color: #989080;
}

.tools .wide {
    grid-column: span 2;
}

/* status bar */
.statusbar {
    display: flex;
    height: 17px;
    border-top: 1px solid #000;
    background-color: #c8d0f0;
    color: #000;
    font-size: 12px;
    line-height: 16px;
    white-space: nowrap;
}

.index {
    display: flex;
}

.index-sh {
    width: 187px;
}

.index-sz {
    width: 181px;
}

.market {
    width: 20px;
    padding-left: 2px;
    color: #00f;
}

.value {
    width: 50px;
    color: #f00;
    text-align: right;
}

.change {
    width: 51px;
    color: #f00;
    text-align: right;
}

.amount {
    padding-left: 4px;
}

.index-sz .amount {
    padding-left: 9px;
}

.news {
    flex: 1;
    overflow: hidden;
}

.alert {
    display: flex;
    align-items: center;
    gap: 2px;
    width: 82px;
    padding-left: 3px;
    background-color: #00f;
    color: #ff0;
    font-weight: bold;
}

.alert svg {
    width: 11px;
    height: 12px;
    fill: #ff0;
}

.brand {
    width: 40px;
    color: #00f;
    font-family: "DejaVu Sans", sans-serif;
    font-weight: bold;
    line-height: 14px;
    text-align: center;
}

.brand span {
    color: #f00;
}

.signal {
    width: 32px;
    padding: 1px 4px;
    border-left: 1px solid #8898b8;
    border-right: 1px solid #8898b8;
}

.signal svg {
    display: block;
    width: 22px;
    height: 14px;
}

.clock {
    width: 37px;
    color: #00f;
    font-size: 13px;
    text-align: center;
}
```
FILE: charts.js
```
// x, high, low
const candles = [
    [64, 124, 138], [70, 123, 170], [76, 165, 185], [82, 148, 188], [87, 155, 172], [91, 160, 178],
    [96, 147, 168], [102, 140, 158], [107, 107, 148], [112, 112, 130], [118, 115, 132], [120, 108, 134],
    [128, 117, 140], [130, 100, 122], [132, 98, 120], [138, 115, 125], [142, 117, 145], [146, 130, 152],
    [152, 148, 155], [156, 112, 148], [162, 120, 130], [168, 114, 132], [174, 126, 134], [178, 102, 124],
    [184, 110, 132], [190, 108, 126], [196, 118, 122], [200, 106, 126], [204, 120, 140], [210, 118, 132],
    [216, 101, 138], [220, 102, 112], [224, 91, 108], [228, 91, 102], [234, 94, 98], [238, 100, 127],
    [244, 106, 118], [250, 108, 120], [254, 112, 132], [258, 120, 138], [262, 134, 154], [264, 140, 161],
    [270, 148, 156], [274, 152, 165], [280, 160, 172], [286, 173, 187], [290, 178, 197], [296, 190, 198],
    [299, 157, 188], [302, 172, 217], [306, 200, 214], [310, 186, 205], [318, 186, 195], [324, 192, 200],
    [328, 204, 228], [334, 218, 237], [338, 230, 268], [342, 262, 290], [345, 285, 318], [350, 278, 306],
    [354, 278, 308], [360, 276, 306], [366, 267, 282], [370, 278, 296], [376, 263, 290], [380, 256, 275],
    [386, 246, 268], [389, 228, 260], [394, 234, 245], [398, 243, 262], [403, 250, 285], [408, 270, 290],
    [412, 277, 300], [418, 277, 298], [424, 270, 282], [430, 270, 284], [434, 268, 292], [437, 255, 306],
    [442, 300, 318], [446, 308, 345], [452, 310, 328], [458, 305, 338], [464, 320, 340], [468, 312, 348],
    [474, 310, 330], [480, 300, 318], [484, 285, 312], [490, 292, 308], [494, 278, 302], [500, 300, 316],
    [504, 281, 312], [510, 296, 312], [516, 305, 324], [520, 320, 346], [524, 348, 360], [528, 348, 370],
    [532, 362, 390], [536, 375, 396], [540, 370, 390], [546, 345, 380], [550, 345, 365], [556, 345, 368],
    [562, 350, 362], [566, 352, 376], [570, 333, 360], [576, 330, 350], [579, 315, 335], [584, 335, 348],
    [588, 300, 330], [592, 278, 310], [598, 282, 292], [604, 285, 308], [610, 290, 305], [612, 250, 290],
    [618, 248, 265], [622, 250, 275], [628, 262, 272], [634, 254, 262], [640, 233, 260], [648, 230, 250],
    [652, 248, 270], [658, 252, 268], [662, 268, 286], [668, 256, 268], [674, 238, 262], [680, 256, 268],
    [686, 245, 282], [690, 264, 284], [694, 252, 270], [700, 246, 264], [704, 232, 252], [710, 222, 248],
    [716, 220, 240], [722, 226, 240], [728, 222, 236], [737, 222, 230]
];

// x, height over the zero line
const histogram = [
    [64, 10], [68, 9], [73, 2], [76, -3], [84, -4], [92, -3], [98, 0], [104, 6], [110, 13], [116, 10],
    [122, 3], [130, 1], [136, 0], [142, -5], [150, -10], [156, -5], [164, -2], [170, 1], [176, 2], [182, 2],
    [190, 0], [200, 1], [206, -3], [212, -1], [220, 4], [228, 6], [234, 3], [240, -4], [250, -5], [260, -10],
    [266, -12], [276, -8], [290, -6], [298, -4], [302, -2], [306, -4], [311, 0], [318, 7], [324, 6], [330, -2],
    [338, -8], [346, -22], [354, -10], [360, 2], [366, 9], [374, 11], [384, 15], [391, 20], [398, 12], [404, 2],
    [410, -6], [416, -8], [422, -3], [428, 1], [436, 3], [440, -3], [446, -13], [452, -8], [460, -2], [468, -1],
    [474, 5], [482, 10], [488, 12], [496, 10], [504, 5], [512, 1], [518, -6], [526, -16], [534, -19], [542, -10],
    [547, 0], [554, 7], [564, 10], [572, 13], [580, 8], [588, 14], [594, 18], [600, 7], [608, 1], [614, 7],
    [620, 9], [626, 2], [632, -4], [640, -2], [646, 0], [654, -8], [662, -13], [668, -7], [674, -2], [682, -3],
    [692, -3], [700, 1], [708, 5], [716, 5], [724, 2], [737, 0]
];

// x, middle, size of the band
const trend = [
    [64, 706, 2], [72, 703, 3], [80, 704, 1], [92, 705, 1], [100, 703, 2], [106, 700, 5], [112, 696, 6],
    [120, 690, 8], [128, 684, 7], [136, 681, 3], [142, 681, 2], [150, 683, 1], [158, 682, 1], [170, 681, 2],
    [182, 679, 2], [192, 677, 2], [205, 677, 1], [215, 676, 2], [226, 673, 3], [234, 671, 2], [240, 672, 1],
    [250, 675, 3], [257, 680, 6], [264, 687, 8], [272, 696, 9], [280, 704, 9], [290, 712, 7], [300, 718, 6],
    [312, 722, 4], [324, 724, 3], [336, 727, 4], [346, 731, 3], [356, 731, 1], [366, 731, 1], [376, 730, 2],
    [386, 728, 4], [396, 723, 5], [404, 720, 4], [412, 720, 2], [417, 721, 1], [427, 721, 1], [437, 719, 2],
    [447, 722, 3], [462, 723, 2], [472, 725, 2], [480, 724, 2], [490, 721, 4], [500, 719, 3], [508, 716, 3],
    [516, 714, 2], [521, 714, 2], [530, 718, 4], [540, 723, 4], [546, 725, 2], [552, 724, 2], [566, 721, 3],
    [576, 718, 4], [586, 714, 5], [594, 706, 9], [602, 698, 9], [610, 691, 8], [618, 685, 7], [628, 679, 6],
    [638, 674, 5], [646, 670, 3], [654, 668, 2], [666, 669, 1], [676, 668, 2], [688, 669, 1], [698, 671, 2],
    [702, 670, 2], [712, 668, 2], [724, 666, 2], [737, 665, 3]
];

function valueAt(points, x, column) {
    for (let i = 1; i < points.length; i++) {
        if (x <= points[i][0]) {
            const a = points[i - 1];
            const b = points[i];
            return a[column] + (b[column] - a[column]) * (x - a[0]) / (b[0] - a[0]);
        }
    }
    return points[points.length - 1][column];
}

function addBars(id, className, d) {
    const path = document.createElementNS('http://www.w3.org/2000/svg', 'path');
    path.setAttribute('class', className);
    path.setAttribute('d', d);
    document.getElementById(id).appendChild(path);
}

function bar(x, top, bottom) {
    return `M${x + 0.5} ${Math.round(top)}V${Math.max(Math.round(bottom), Math.round(top) + 1)}`;
}

function drawCandles() {
    let up = '';
    let down = '';
    let seed = 7;
    for (let x = 65; x < 737; x += 2) {
        seed = (seed * 73 + 41) % 997;
        const high = Math.max(91, valueAt(candles, x, 1) + seed % 7 - 3);
        const low = Math.min(396, valueAt(candles, x, 2) + seed % 9 - 4);
        const change = valueAt(candles, x + 2, 1) - valueAt(candles, x - 2, 1) + seed % 13 - 6;
        if (change > 0) {
            down += bar(x, high, low);
        } else {
            up += bar(x, high, low);
        }
    }
    addBars('candles', 'bar-up', up);
    addBars('candles', 'bar-down', down);
}

function drawHistogram() {
    const zero = 603;
    let up = '';
    let down = '';
    for (let x = 64; x < 738; x += 2) {
        const value = valueAt(histogram, x, 1);
        if (value > 0) {
            up += bar(x, zero - value, zero);
        } else {
            down += bar(x, zero, zero - value);
        }
    }
    addBars('histogram', 'bar-up', up);
    addBars('histogram', 'bar-down', down);
}

function drawTrend() {
    let rise = '';
    let fall = '';
    for (let x = 64; x < 738; x += 2) {
        const middle = valueAt(trend, x, 1);
        const size = valueAt(trend, x, 2);
        const d = bar(x, middle - size / 2, middle + size / 2);
        if (valueAt(trend, x + 2, 1) > valueAt(trend, x, 1)) {
            fall += d;
        } else {
            rise += d;
        }
    }
    addBars('trend', 'bar-rise', rise);
    addBars('trend', 'bar-fall', fall);
}

drawCandles();
drawHistogram();
drawTrend();
```
